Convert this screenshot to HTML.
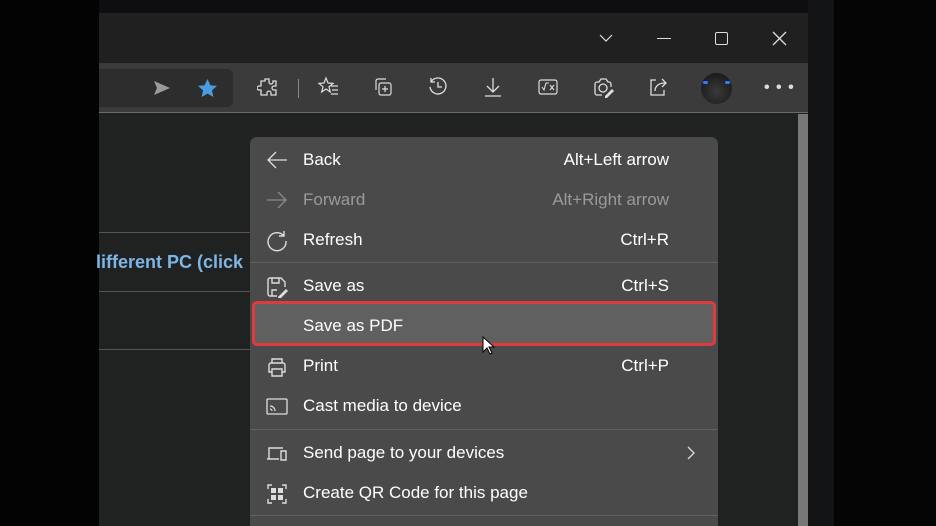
<!DOCTYPE html>
<html><head><meta charset="utf-8"><style>
*{margin:0;padding:0;box-sizing:border-box}
html{width:936px;height:526px;overflow:hidden}
body{width:936px;height:526px;overflow:hidden;background:#050505;position:relative;font-family:"Segoe UI","Liberation Sans",sans-serif}
.abs{position:absolute}
.menu{left:250px;top:137px;width:468px;height:389px;background:#4a4a4a;border-radius:7px 7px 0 0;overflow:hidden}
.it{position:absolute;left:0;width:468px;height:40px;color:#fff;font-size:17px}
.it .t{position:absolute;left:53px;top:10px}
.it .k{position:absolute;right:49px;top:10px}
.it svg{position:absolute;left:16px;top:10px}
.sep{position:absolute;left:0;width:468px;height:1px;background:#5f5f5f}
.tb svg{position:absolute;top:76px}
</style></head><body>
<div class="abs" style="left:0;top:0;width:834px;height:13px;background:#0d0d12"></div>
<div class="abs" style="left:808px;top:0;width:26px;height:526px;background:#121415"></div>
<div class="abs" style="left:0;top:0;width:99px;height:526px;background:#030303"></div>
<div class="abs" style="left:99px;top:13px;width:709px;height:50px;background:#202020"></div>
<div class="abs" style="left:99px;top:63px;width:709px;height:49px;background:#3b3b3b"></div>
<div class="abs" style="left:99px;top:112px;width:709px;height:1px;background:#6a6a6a"></div>
<div class="abs" style="left:99px;top:113px;width:709px;height:413px;background:#202121"></div>
<div class="abs" style="left:798px;top:114px;width:10px;height:412px;background:#777"></div>
<svg class="abs" style="left:598px;top:32px" width="16" height="12"><path d="M2 3l6 6 6-6" stroke="#ddd" fill="none" stroke-width="1.2"/></svg>
<div class="abs" style="left:657px;top:38px;width:14px;height:1px;background:#ddd"></div>
<div class="abs" style="left:715px;top:32px;width:13px;height:13px;border:1.2px solid #ddd;border-radius:2px"></div>
<svg class="abs" style="left:772px;top:31px" width="15" height="15"><path d="M1 1L14 14M14 1L1 14" stroke="#ddd" stroke-width="1.3"/></svg>
<div class="abs" style="left:99px;top:69px;width:134px;height:38px;background:#2d2d2d;border-radius:0 6px 6px 0"></div>
<svg class="abs" style="left:152px;top:79px" width="20" height="18"><path d="M2 2L18 9L2 16L5 9Z" fill="#9a9a9a"/></svg>
<svg class="abs" style="left:197px;top:78px" width="21" height="20"><path d="M10.5 1l2.9 6.2 6.6.7-5 4.5 1.4 6.6-5.9-3.4-5.9 3.4 1.4-6.6-5-4.5 6.6-.7z" fill="#4a9be0"/></svg>
<div class="tb">
<svg style="left:257px" width="22" height="22" viewBox="0 0 22 22"><path d="M8 3h4v3a2 2 0 004 0V5h3v5h-2a2 2 0 000 4h2v5h-5v-2a2 2 0 00-4 0v2H4v-5H2a2 2 0 010-4h2V5h4z" stroke="#ddd" fill="none" stroke-width="1.3"/></svg>
<div class="abs" style="left:298px;top:79px;width:1px;height:19px;background:#888"></div>
<svg style="left:318px" width="22" height="22"><path d="M8 2l2 5 5 .4-4 3.4 1.3 5.2L8 13l-4.3 3 1.3-5.2-4-3.4 5-.4z" stroke="#ddd" fill="none" stroke-width="1.2"/><path d="M13 10h7M14 14h6M13 18h7" stroke="#ddd" stroke-width="1.2"/></svg>
<svg style="left:373px" width="22" height="22"><rect x="6" y="7" width="12" height="12" rx="2" stroke="#ddd" fill="none" stroke-width="1.2"/><path d="M3 14V5a2 2 0 012-2h8M12 10v6M9 13h6" stroke="#ddd" fill="none" stroke-width="1.2"/></svg>
<svg style="left:427px" width="22" height="22"><path d="M4 6a8 8 0 11-1 5M4 2v4h4M11 6v5h4" stroke="#ddd" fill="none" stroke-width="1.3"/></svg>
<svg style="left:482px" width="22" height="22"><path d="M11 2v14M5 10l6 6 6-6M3 20h16" stroke="#ddd" fill="none" stroke-width="1.3"/></svg>
<svg style="left:537px" width="22" height="22"><rect x="2" y="4" width="18" height="14" rx="2" stroke="#ddd" fill="none" stroke-width="1.2"/><path d="M5 11l2 3 2-7h3M13 9l4 5M17 9l-4 5" stroke="#ddd" fill="none" stroke-width="1.1"/></svg>
<svg style="left:592px" width="22" height="22"><path d="M3 8a2 2 0 012-2h2l2-3h5l2 3h1a2 2 0 012 2v3M10 19H5a2 2 0 01-2-2V8" stroke="#ddd" fill="none" stroke-width="1.3"/><circle cx="11" cy="12" r="4" stroke="#ddd" fill="none" stroke-width="1.3"/><path d="M13 20l7-7 2 2-7 7h-2z" fill="#ddd"/></svg>
<svg style="left:647px" width="22" height="22"><path d="M9 4H4v15h13v-5" stroke="#ddd" fill="none" stroke-width="1.3"/><path d="M8 15c0-5 4-8 10-8M15 3l4 4-4 4" stroke="#ddd" fill="none" stroke-width="1.3"/></svg>
</div>
<div class="abs" style="left:701px;top:73px;width:31px;height:31px;border-radius:50%;background:radial-gradient(circle at 50% 60%,#3a3a3a,#111)"></div>
<div class="abs" style="left:703px;top:81px;width:5px;height:3px;background:#2a7fff;border-radius:2px"></div>
<div class="abs" style="left:725px;top:81px;width:5px;height:3px;background:#2a7fff;border-radius:2px"></div>
<div class="abs" style="left:764px;top:86px;color:#ddd;font-size:16px;letter-spacing:1px;font-weight:bold;line-height:4px">• • •</div>
<div class="abs" style="left:99px;top:232px;width:151px;height:1px;background:#555"></div>
<div class="abs" style="left:99px;top:291px;width:151px;height:1px;background:#555"></div>
<div class="abs" style="left:99px;top:349px;width:151px;height:1px;background:#555"></div>
<div class="abs" style="left:96px;top:252px;color:#7db6e6;font-size:18px;font-weight:bold;white-space:nowrap;width:154px;overflow:hidden">lifferent PC (click</div>
<div class="abs menu">
<div class="it" style="top:3px;"><svg width="22" height="20"><path d="M21 10H2M10 2L2 10l8 8" stroke="#ddd" fill="none" stroke-width="1.3"/></svg><span class="t">Back</span><span class="k">Alt+Left arrow</span></div>
<div class="it" style="top:43px;color:#9a9a9a"><svg width="22" height="20"><path d="M1 10h19M12 2l8 8-8 8" stroke="#8a8a8a" fill="none" stroke-width="1.3"/></svg><span class="t">Forward</span><span class="k">Alt+Right arrow</span></div>
<div class="it" style="top:83px;"><svg width="22" height="22"><path d="M18 6A9 9 0 1020 11M18 1v5h-5" stroke="#ddd" fill="none" stroke-width="1.4"/></svg><span class="t">Refresh</span><span class="k">Ctrl+R</span></div>
<div class="sep" style="top:125px"></div>
<div class="it" style="top:129px;"><svg width="22" height="22"><path d="M11 20H4a2 2 0 01-2-2V4a2 2 0 012-2h11l4 4v5M6 2v5h7V2M6 20v-6h5" stroke="#ddd" fill="none" stroke-width="1.4"/><path d="M12 21l8-8 2 2-8 8h-2z" fill="#ddd"/></svg><span class="t">Save as</span><span class="k">Ctrl+S</span></div>
<div class="abs" style="left:2px;top:164px;width:464px;height:45px;border:3px solid #e03a3e;border-radius:5px;background:#606060"></div>
<div class="it" style="top:169px;"><span class="t">Save as PDF</span></div>
<svg class="abs" style="left:232px;top:199px" width="14" height="20"><path d="M1 1v15l4-4 3 6 2-1-3-6h5z" fill="#fff" stroke="#000" stroke-width="1"/></svg>
<div class="it" style="top:209px;"><svg width="22" height="22"><path d="M6 7V3h10v4M6 16H3V9a2 2 0 012-2h12a2 2 0 012 2v7h-3M6 13h10v7H6z" stroke="#ddd" fill="none" stroke-width="1.4"/></svg><span class="t">Print</span><span class="k">Ctrl+P</span></div>
<div class="it" style="top:249px;"><svg width="22" height="22"><rect x="1" y="3" width="20" height="15" rx="1" stroke="#ddd" fill="none" stroke-width="1.3"/><path d="M4 10a5 5 0 015 5M4 13a2 2 0 012 2" stroke="#ddd" fill="none" stroke-width="1.2"/></svg><span class="t">Cast media to device</span></div>
<div class="sep" style="top:292px"></div>
<div class="it" style="top:296px;"><svg width="22" height="22"><path d="M3 16V5h14M1 16h12M15 8h5v9h-5z" stroke="#ddd" fill="none" stroke-width="1.4"/></svg><span class="t">Send page to your devices</span><svg style="left:436px;top:13px" width="10" height="14"><path d="M2 1l6 6-6 6" stroke="#ddd" fill="none" stroke-width="1.3"/></svg></div>
<div class="it" style="top:336px;"><svg width="22" height="22"><path d="M2 6V2h4M16 2h4v4M2 16v4h4M20 16v4h-4" stroke="#ddd" fill="none" stroke-width="1.4"/><rect x="5" y="5" width="5" height="5" fill="#ddd"/><rect x="12" y="5" width="5" height="5" fill="#ddd"/><rect x="5" y="12" width="5" height="5" fill="#ddd"/><rect x="12" y="12" width="5" height="5" fill="#ddd"/></svg><span class="t">Create QR Code for this page</span></div>
<div class="sep" style="top:378px"></div>
</div>
</body></html>
